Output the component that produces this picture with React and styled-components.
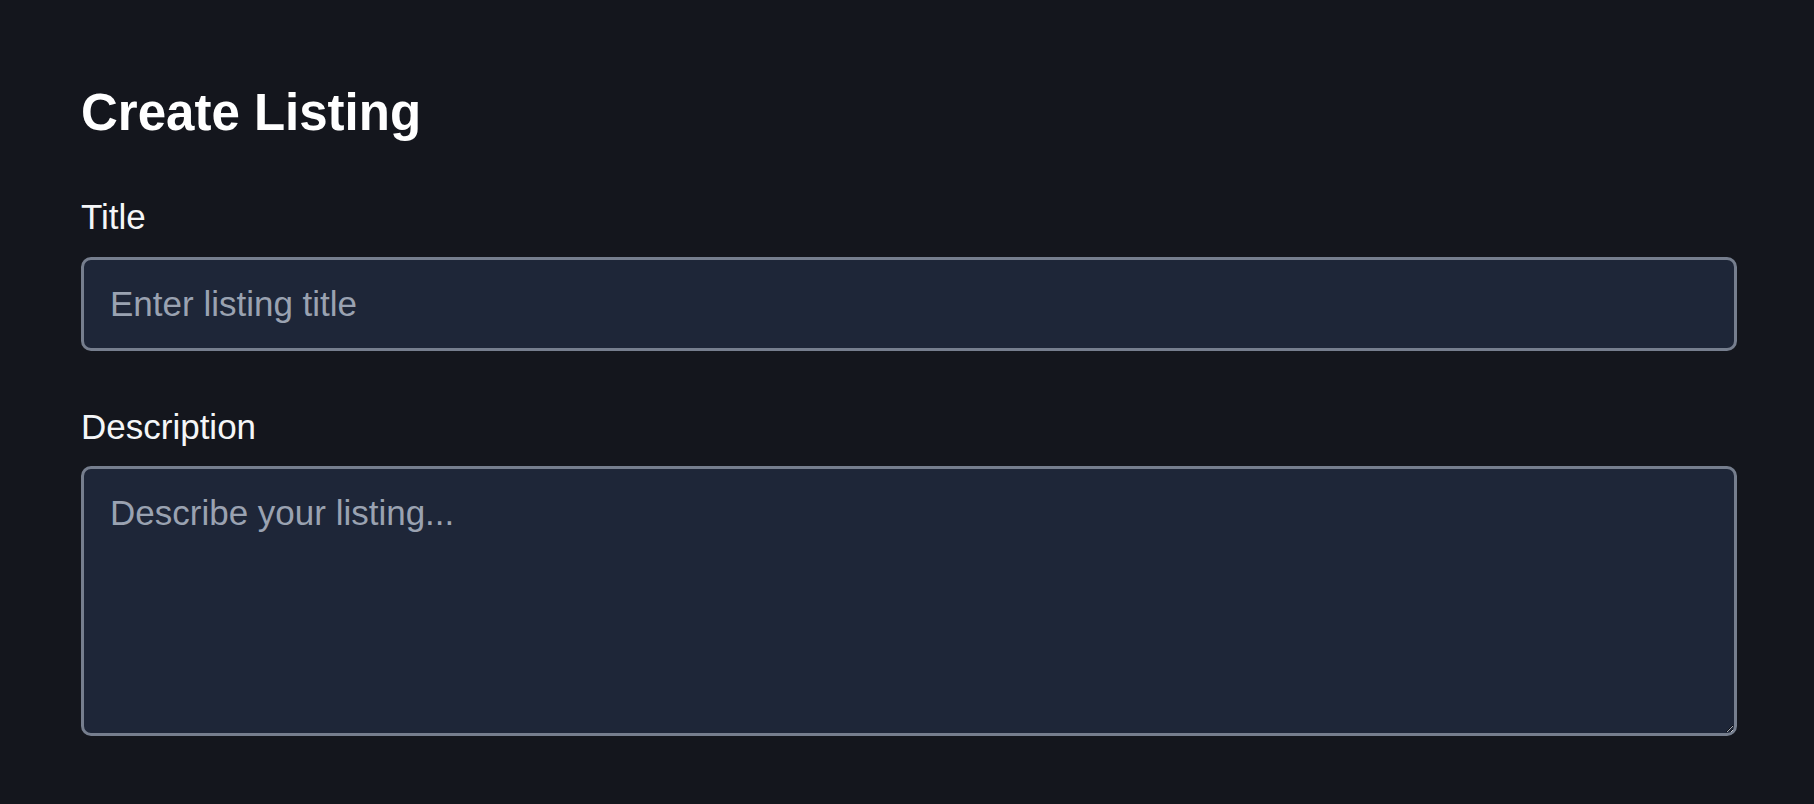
import React from 'react'
import styled, { createGlobalStyle } from 'styled-components'

const GlobalStyle = createGlobalStyle`
  html, body {
    margin: 0;
    padding: 0;
    background-color: #14161d;
  }

  body {
    font-family: "Liberation Sans", Arial, Helvetica, sans-serif;
    color: #ffffff;
  }
`

const App = () => {
    return (
        <>
            <GlobalStyle />
            <Page>
                <Form onSubmit={(e) => e.preventDefault()}>
                    <Heading>Create Listing</Heading>

                    <Field>
                        <Label htmlFor="title">Title</Label>
                        <Input id="title" type="text" placeholder="Enter listing title" />
                    </Field>

                    <Field>
                        <Label htmlFor="description">Description</Label>
                        <TextArea id="description" placeholder="Describe your listing..." />
                    </Field>
                </Form>
            </Page>
        </>
    )
}

export default App


const Page = styled.main`
  min-height: 804px;
  box-sizing: border-box;
  padding: 78px 77px 0 81px;
  background-color: #14161d;
`

const Form = styled.form`
  display: flex;
  flex-direction: column;
  width: 100%;
`

const Heading = styled.h1`
  margin: 0 0 44px 0;
  font-size: 51px;
  line-height: 69px;
  font-weight: 700;
  color: #ffffff;
`

const Field = styled.div`
  display: flex;
  flex-direction: column;
  gap: 13px;
  margin-bottom: 50px;
`

const Label = styled.label`
  font-size: 35px;
  line-height: 52.5px;
  color: #f5f6f8;
`

const fieldBase = `
  box-sizing: border-box;
  width: 100%;
  margin: 0;
  padding: 18px 26px;
  font-family: "Liberation Sans", Arial, Helvetica, sans-serif;
  font-size: 35px;
  line-height: 52.5px;
  color: #f3f4f6;
  background-color: #1e2638;
  border: 3px solid #767e8e;
  border-radius: 10px;
  outline: none;
  color-scheme: dark;

  &::placeholder {
    color: #9aa2b1;
    opacity: 1;
  }
`

const Input = styled.input`
  ${fieldBase}
  height: 94px;
`

const TextArea = styled.textarea`
  ${fieldBase}
  display: block;
  height: 270px;
  resize: vertical;
`
